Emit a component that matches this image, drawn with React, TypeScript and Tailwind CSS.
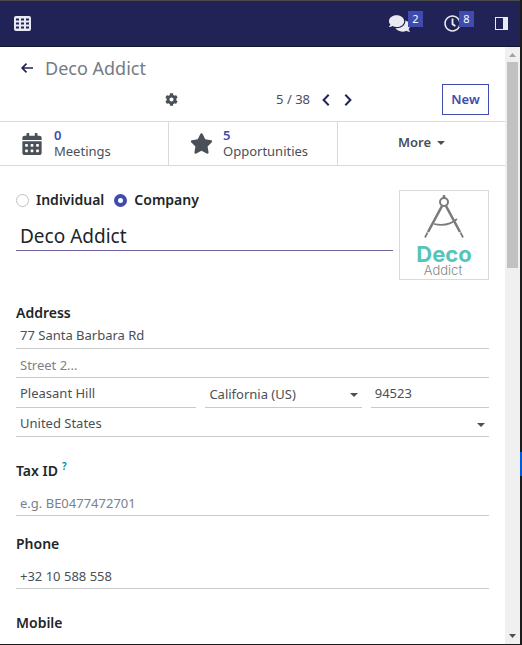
import type { ReactNode } from "react";
import { FaCalendarAlt, FaCog, FaComments, FaRegClock, FaStar } from "react-icons/fa";

const underline = "w-full border-b border-[#c8c9cb] bg-transparent px-1 text-[13px] text-[#495057] outline-none placeholder:text-[#7a828a]";

function AppsIcon() {
  return (
    <svg width="17" height="15" viewBox="0 0 17 15" aria-hidden="true">
      <rect width="17" height="15" rx="2" fill="#e9e9f2" />
      {[2, 7, 12].map((x) =>
        [2, 6, 10].map((y) => <rect key={`${x}-${y}`} x={x} y={y + 0.5} width="3" height="2" fill="#212357" />),
      )}
    </svg>
  );
}

function Badge({ children }: { children: ReactNode }) {
  return (
    <span className="absolute -top-1 left-full -ml-0.5 flex h-4 w-[15px] items-center justify-center bg-[#3f4cad] text-[11px] leading-4 text-white">
      {children}
    </span>
  );
}

function TopBar() {
  return (
    <header className="flex h-[47px] shrink-0 items-center border-t border-b border-t-[#4a4a4a] border-b-[#14152f] bg-[#212357] pr-3 pl-3.5 text-[#e9e9f2]">
      <button aria-label="Apps">
        <AppsIcon />
      </button>
      <div className="ml-auto flex items-center">
        <button aria-label="Messages" className="relative mr-[34px] flex h-[17px] items-center">
          <FaComments size={21} />
          <Badge>2</Badge>
        </button>
        <button aria-label="Activities" className="relative mr-[34px]">
          <FaRegClock size={17} />
          <Badge>8</Badge>
        </button>
        <button aria-label="Toggle side panel">
          <svg width="13" height="13" viewBox="0 0 13 13" aria-hidden="true">
            <path d="M0 0H13V13H0ZM1 1V12H8V1Z" fill="currentColor" fillRule="evenodd" />
          </svg>
        </button>
      </div>
    </header>
  );
}

function Chevron({ d }: { d: string }) {
  return (
    <svg width="8" height="12" viewBox="0 0 8 12" fill="none" stroke="#212357" strokeWidth="2" aria-hidden="true">
      <path d={d} />
    </svg>
  );
}

function Caret() {
  return (
    <svg width="8" height="4" viewBox="0 0 8 4" fill="#495057" aria-hidden="true">
      <path d="M0 0H8L4 4Z" />
    </svg>
  );
}

function ControlPanel() {
  return (
    <div className="px-4 pt-[7px] pb-1.5">
      <div className="flex h-7 items-center">
        <button aria-label="Back" className="ml-[5px]">
          <svg width="12" height="10" viewBox="0 0 12 10" fill="none" stroke="#212357" strokeWidth="1.7" aria-hidden="true">
            <path d="M5.5 0.7 1.2 5l4.3 4.3M1.2 5H12" />
          </svg>
        </button>
        <h1 className="ml-3 text-[18px] leading-7 text-[#737b83]">Deco Addict</h1>
      </div>
      <div className="mt-0.5 flex h-[31px] items-center">
        <button aria-label="Settings" className="ml-[149px] text-[#495057]">
          <FaCog size={13} />
        </button>
        <span className="ml-auto text-[13px] text-[#495057]">5 / 38</span>
        <button aria-label="Previous" className="ml-3">
          <Chevron d="M6.7 0.7 1.6 6l5.1 5.3" />
        </button>
        <button aria-label="Next" className="ml-3.5">
          <Chevron d="M1.3 0.7 6.4 6l-5.1 5.3" />
        </button>
        <button className="ml-[90px] h-[31px] w-[47px] border border-[#3f4cad] text-[13px] font-semibold text-[#3f4cad]">New</button>
      </div>
    </div>
  );
}

function Stat({ icon, count, label }: { icon: ReactNode; count: number; label: string }) {
  return (
    <button className="flex items-center border-r border-[#d8dadd] pl-5 text-left text-[13px] leading-4 text-[#495057]">
      <span className="flex w-6 justify-center">{icon}</span>
      <span className="ml-2.5 pb-0.5">
        <span className="block font-semibold text-[#3f4cad]">{count}</span>
        <span className="block">{label}</span>
      </span>
    </button>
  );
}

function Stats() {
  return (
    <div className="grid h-[45px] grid-cols-[169fr_169fr_167fr] border-y border-[#d8dadd]">
      <Stat icon={<FaCalendarAlt size={22} />} count={0} label="Meetings" />
      <Stat icon={<FaStar size={23} />} count={5} label="Opportunities" />
      <button className="flex items-center justify-center gap-1.5 pb-0.5 text-[13px] font-semibold text-[#495057]">
        More
        <Caret />
      </button>
    </div>
  );
}

function Logo() {
  return (
    <svg width="88" height="88" viewBox="0 0 88 88" role="img" aria-label="Deco Addict logo">
      <g fill="none" stroke="#7b7b7b">
        <path d="M44 4V8" strokeWidth="2.5" />
        <circle cx="44" cy="11" r="4" strokeWidth="2" />
        <path d="M42 15 28 41M46 15 60 41" strokeWidth="2.6" />
        <path d="M27.5 41.500 25 46.500M60.500 41.500 63 46.500" strokeWidth="1.700" />
        <path d="M34 33Q48 36 57 28" strokeWidth="1.700" />
      </g>
      <text x="44" y="71" textAnchor="middle" fill="#56c4b7" fontSize="22" fontWeight="700" fontFamily="Inter, sans-serif">Deco</text>
      <text x="43" y="84" textAnchor="middle" fill="#868686" fontSize="13" fontWeight="300" fontFamily="Inter, sans-serif">Addict</text>
    </svg>
  );
}

function Radio({ label, checked }: { label: string; checked?: boolean }) {
  return (
    <label className="flex items-center gap-[7px] text-[14px] leading-5 font-semibold text-[#212529]">
      <input
        type="radio"
        name="kind"
        defaultChecked={checked}
        className="size-[13px] appearance-none rounded-full border border-[#bfc1c4] bg-white checked:border-4 checked:border-[#3f4cad]"
      />
      {label}
    </label>
  );
}

function Select({ label, value }: { label: string; value: string }) {
  return (
    <div className="relative flex h-full min-h-0">
      <select aria-label={label} className={`${underline} h-full appearance-none pb-0.5 leading-4`}>
        <option>{value}</option>
      </select>
      <span className="pointer-events-none absolute inset-y-0 right-1 flex items-center">
        <Caret />
      </span>
    </div>
  );
}

const labelClass = "block text-[14px] leading-5 font-semibold text-[#212529]";

function ContactForm() {
  return (
    <form className="px-4 pt-6">
      <div className="flex gap-1.5">
        <div className="min-w-0 flex-1">
          <div className="flex gap-2.5">
            <Radio label="Individual" />
            <Radio label="Company" checked />
          </div>
          <input
            aria-label="Name"
            defaultValue="Deco Addict"
            className="mt-2.5 h-[31px] w-full border-b border-[#71639e] bg-transparent px-1 pt-0.5 text-[19px] text-[#212529] outline-none"
          />
        </div>
        <div className="size-[90px] shrink-0 border border-[#d8dadd]">
          <Logo />
        </div>
      </div>

      <label htmlFor="street" className={`${labelClass} mt-[23px]`}>Address</label>
      <input id="street" defaultValue="77 Santa Barbara Rd" className={`${underline} block h-[26px] pb-0.5`} />
      <input aria-label="Street 2" placeholder="Street 2..." className={`${underline} mt-1 block h-[25px]`} />
      <div className="mt-1 grid h-[26px] grid-cols-[180fr_156fr_118fr] grid-rows-[26px] gap-[9px]">
        <input aria-label="City" defaultValue="Pleasant Hill" className={`${underline} pb-0.5`} />
        <Select label="State" value="California (US)" />
        <input aria-label="ZIP" defaultValue="94523" className={`${underline} pb-0.5`} />
      </div>
      <div className="mt-1 h-[25px]">
        <Select label="Country" value="United States" />
      </div>

      <label htmlFor="tax" className={`${labelClass} mt-6`}>
        Tax ID
        <sup className="-top-1.5 ml-1 text-[10px] text-[#0180a5]">?</sup>
      </label>
      <input id="tax" placeholder="e.g. BE0477472701" className={`${underline} mt-[9px] block h-[26px]`} />

      <label htmlFor="phone" className={`${labelClass} mt-[18px]`}>Phone</label>
      <input id="phone" defaultValue="+32 10 588 558" className={`${underline} mt-[9px] block h-[26px]`} />

      <label htmlFor="mobile" className={`${labelClass} mt-6`}>Mobile</label>
      <input id="mobile" className={`${underline} mt-[9px] block h-[26px]`} />
    </form>
  );
}

function ScrollBar() {
  return (
    <div className="flex w-[15px] shrink-0 flex-col items-center bg-[#f0f0f0]" aria-hidden="true">
      <svg width="15" height="15" viewBox="0 0 15 15">
        <path d="M4 10 7.500 6 11 10Z" fill="#a3a3a3" />
      </svg>
      <div className="h-[206px] w-[11px] bg-[#c1c1c1]" />
      <svg width="15" height="15" viewBox="0 0 15 15" className="mt-auto">
        <path d="M4 5 7.500 9 11 5Z" fill="#505050" />
      </svg>
    </div>
  );
}

export default function App() {
  return (
    <div className="flex h-screen overflow-hidden bg-[#1b1b1b] font-['Noto_Sans',sans-serif]">
      <div className="flex min-w-0 flex-1 flex-col border-b border-[#1b1b1b]">
        <TopBar />
        <div className="flex min-h-0 flex-1">
          <main className="min-w-0 flex-1 overflow-hidden bg-white">
            <ControlPanel />
            <Stats />
            <ContactForm />
          </main>
          <ScrollBar />
        </div>
      </div>
      <div className="w-0.5 shrink-0 pt-[452px]" aria-hidden="true">
        <div className="h-6 bg-[#0057e0]" />
      </div>
    </div>
  );
}
